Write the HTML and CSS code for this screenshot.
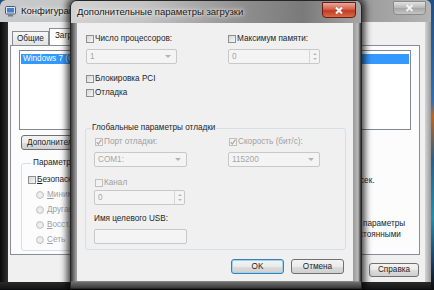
FILE: index.html
```html
<!DOCTYPE html>
<html lang="ru">
<head>
  <meta charset="UTF-8">
  <title>Дополнительные параметры загрузки</title>
  <link rel="stylesheet" href="styles.css">
</head>
<body>
  <div class="desktop">
    <div class="window main-window">
      <div class="titlebar">
        <svg class="app-icon" width="11" height="11" viewBox="0 0 11 11">
          <rect x="0.5" y="0.5" width="10" height="7.5" rx="1" fill="#dfe6ee" stroke="#4a5a70"/>
          <rect x="2" y="2" width="7" height="4.5" fill="#3f7fd0"/>
          <rect x="3" y="8.5" width="5" height="2" fill="#6f7d8f"/>
        </svg>
        <span class="title">Конфигурация системы</span>
        <div class="close-btn close-inactive">
          <svg width="9" height="8" viewBox="0 0 9 8"><path d="M1.5 1 L7.5 7 M7.5 1 L1.5 7" stroke="#f4f4f4" stroke-width="1.8"/></svg>
        </div>
      </div>
      <div class="client">
        <div class="tabs">
          <div class="tab">Общие</div>
          <div class="tab tab-active">Загрузка</div>
        </div>
        <div class="tab-panel">
          <div class="listbox">
            <div class="list-row selected">Windows 7 (C:\Windows)</div>
          </div>
          <div class="panel-buttons">
            <button class="btn">Дополнительно...</button>
          </div>
          <div class="boot-options">
            <fieldset class="group boot-group">
              <legend>Параметры загрузки</legend>
              <label class="check"><span class="box"></span><span><u>Б</u>езопасный режим</span></label>
              <label class="radio"><span class="dot"></span><span><u>М</u>иним.</span></label>
              <label class="radio"><span class="dot"></span><span><u>Д</u>ругая</span></label>
              <label class="radio"><span class="dot"></span><span><u>В</u>осст.</span></label>
              <label class="radio"><span class="dot"></span><span><u>С</u>еть</span></label>
            </fieldset>
            <div class="right-col">
              <div class="timeout">сек.</div>
              <div class="persist">параметры<br>стоянными</div>
            </div>
          </div>
        </div>
        <div class="footer">
          <button class="btn">Справка</button>
        </div>
      </div>
    </div>

    <div class="window dialog">
      <div class="titlebar dialog-titlebar">
        <span class="title">Дополнительные параметры загрузки</span>
        <div class="close-btn close-active">
          <svg width="10" height="9" viewBox="0 0 10 9"><path d="M2 1.5 L8 7.5 M8 1.5 L2 7.5" stroke="#ffffff" stroke-width="2"/></svg>
        </div>
      </div>
      <div class="client dialog-client">
        <div class="option-grid">
          <div class="field">
            <label class="check"><span class="box"></span>Число процессоров:</label>
            <div class="combo disabled combo-cpu">1<span class="arrow"></span></div>
          </div>
          <div class="field">
            <label class="check"><span class="box"></span>Максимум памяти:</label>
            <div class="spin disabled spin-mem">0<span class="spin-btns"><i class="up"></i><i class="down"></i></span></div>
          </div>
        </div>
        <label class="check pci"><span class="box"></span>Блокировка PCI</label>
        <label class="check debug"><span class="box"></span>Отладка</label>

        <fieldset class="group debug-group">
          <legend>Глобальные параметры отладки</legend>
          <div class="option-grid debug-grid">
            <div class="field">
              <label class="check disabled-text"><span class="box box-checked"><svg width="6" height="6" viewBox="0 0 6 6"><path d="M0.6 3.2 L2.3 5 L5.4 0.6" fill="none" stroke="#a9a9a9" stroke-width="1.2"/></svg></span>Порт отладки:</label>
              <div class="combo disabled combo-port">COM1:<span class="arrow"></span></div>
              <label class="check disabled-text channel"><span class="box box-dim"></span>Канал</label>
              <div class="spin disabled spin-channel">0<span class="spin-btns"><i class="up"></i><i class="down"></i></span></div>
              <div class="usb-label">Имя целевого USB:</div>
              <div class="textbox disabled"></div>
            </div>
            <div class="field">
              <label class="check disabled-text"><span class="box box-checked"><svg width="6" height="6" viewBox="0 0 6 6"><path d="M0.6 3.2 L2.3 5 L5.4 0.6" fill="none" stroke="#a9a9a9" stroke-width="1.2"/></svg></span>Скорость (бит/с):</label>
              <div class="combo disabled combo-baud">115200<span class="arrow"></span></div>
            </div>
          </div>
        </fieldset>

        <div class="dialog-buttons">
          <button class="btn btn-default">OK</button>
          <button class="btn">Отмена</button>
        </div>
      </div>
    </div>
  </div>
</body>
</html>
```

FILE: styles.css
```css
body {
  margin: 0;
  font-family: 'Liberation Sans', Arial, sans-serif;
  font-size: 8.2px;
  line-height: 10px;
  color: #1e1e1e;
  background: #0c0c0c;
}
.desktop {
  position: relative;
  width: 434px;
  height: 290px;
  overflow: hidden;
  background: linear-gradient(to bottom, #1e4f86 0, #2f6fb5 35%, #c0651f 40%, #2a5f8a 55%, #1f8fb0 75%, #1b3f66 90%, #0c0c0c 100%);
}

/* windows */
.window {
  position: absolute;
  box-sizing: border-box;
  display: flex;
  flex-direction: column;
}
.main-window {
  z-index: 1;
  left: 0;
  top: 0;
  width: 431px;
  height: 289px;
  padding: 0 6px 7px 8px;
  background:
    linear-gradient(to top, #141414 0, #2a2a2a 7px, transparent 7px),
    linear-gradient(to right, #080808 0, #303030 8px, #7a7a7a 50%, #d4d4d4 calc(100% - 6px), #9a9a9a 100%);
  border-radius: 6px 6px 0 0;
}
.dialog {
  z-index: 2;
  left: 70px;
  top: 0;
  width: 292px;
  height: 289px;
  padding: 0 8px 7px 6px;
  background:
    linear-gradient(to top, #3a3a3a 0, #6e6e6e 6px, transparent 7px),
    linear-gradient(to right, #3c3c3c 0, #9c9c9c 5px, #9a9a9a calc(100% - 8px), #b9b9b9 calc(100% - 3px), #2c2c2c 100%);
  border: 1px solid #262626;
  border-radius: 6px 6px 0 0;
  box-shadow: 0 0 7px 3px rgba(0, 0, 0, 0.75);
}

.titlebar {
  position: relative;
  height: 22px;
  margin: 0 -6px 0 -8px;
  padding-left: 5px;
  display: flex;
  align-items: center;
  gap: 5px;
  border-radius: 6px 6px 0 0;
  background: linear-gradient(to right, #c9cacb 0, #bcbdbe 40%, #9c9c9c 85%, #b4b4b4 100%);
}
.title {
  font-size: 9.5px;
  color: #151515;
  text-shadow: 0 0 6px #fff, 0 0 3px #fff;
  white-space: nowrap;
}
.dialog-titlebar {
  margin: 0 -8px 0 -6px;
  padding-left: 6px;
  background: linear-gradient(to right, #d2d2d2 0, #c4c4c4 25%, #8e8e8e 60%, #7a7a7a 80%, #a6a6a6 100%);
}
.close-btn {
  position: absolute;
  top: 1px;
  display: flex;
  align-items: center;
  justify-content: center;
  box-sizing: border-box;
  border-radius: 0 0 4px 4px;
}
.close-inactive {
  right: 5px;
  width: 33px;
  height: 14px;
  border: 1px solid #8a8a8a;
  background: linear-gradient(to bottom, #e2e2e2, #b7b7b7 50%, #a6a6a6 51%, #c4c4c4);
}
.close-active {
  right: 5px;
  width: 34px;
  height: 16px;
  border: 1px solid #6a1b12;
  background: linear-gradient(to bottom, #e9a99a 0, #d2604a 45%, #c13b24 55%, #d96b45 100%);
}

.client {
  flex: 1;
  background: #f0f0f0;
  display: flex;
  flex-direction: column;
  min-height: 0;
}

/* back window contents */
.main-window .client {
  padding: 6px 5px 0 2px;
}
.tabs {
  display: flex;
  align-items: flex-end;
  height: 17px;
  padding-left: 2px;
}
.tab {
  height: 13px;
  padding: 0 4px;
  border: 1px solid #898c95;
  border-bottom: none;
  background: linear-gradient(to bottom, #f7f7f7, #e2e2e2);
  white-space: nowrap;
  line-height: 13px;
  margin-right: -1px;
}
.tab-active {
  height: 16px;
  background: #fff;
  position: relative;
  z-index: 1;
  margin: 0 1px;
  padding: 0 5px;
}
.tab-panel {
  height: 210px;
  box-sizing: border-box;
  border: 1px solid #898c95;
  background: #fcfcfc;
  padding: 4px 8px 0 8px;
}
.listbox {
  height: 80px;
  box-sizing: border-box;
  border: 1px solid #828790;
  background: #fff;
  padding: 3px 1px;
}
.list-row {
  height: 10px;
  padding-left: 2px;
  white-space: nowrap;
  overflow: hidden;
}
.selected {
  background: #3399ff;
  color: #fff;
}
.panel-buttons {
  display: flex;
  gap: 6px;
  margin: 5px 0 0 2px;
}
.btn {
  font: inherit;
  height: 15px;
  padding: 0 5px;
  box-sizing: border-box;
  border: 1px solid #707070;
  border-radius: 3px;
  color: #1e1e1e;
  background: linear-gradient(to bottom, #f3f3f3 0, #ebebeb 50%, #dddddd 51%, #cfcfcf 100%);
  white-space: nowrap;
}
.boot-options {
  display: flex;
  margin-top: 8px;
}
.group {
  margin: 0;
  padding: 0;
  border: 1px solid #d5dfe5;
  border-radius: 3px;
}
.group legend {
  padding: 0 2px;
  margin-left: 3px;
  line-height: 10px;
}
.boot-group {
  width: 180px;
  margin-left: 2px;
  padding: 7px 6px 5px 6px;
  display: flex;
  flex-direction: column;
  gap: 5px;
}
.radio {
  display: flex;
  align-items: center;
  gap: 3px;
  margin-left: 8px;
  color: #a0a0a0;
  white-space: nowrap;
}
.dot {
  width: 8px;
  height: 8px;
  box-sizing: border-box;
  border-radius: 50%;
  border: 1px solid #c4c4c4;
  background: radial-gradient(circle, #f4f4f4 0, #dedede 100%);
}
.right-col {
  flex: 1;
  display: flex;
  flex-direction: column;
  align-items: flex-end;
  padding: 18px 0 0 0;
}
.timeout {
  width: 20px;
  margin-right: 31px;
  white-space: nowrap;
}
.persist {
  width: 50px;
  margin: 32px 2px 0 0;
  text-indent: 4px;
  line-height: 11px;
  white-space: nowrap;
}
.footer {
  display: flex;
  justify-content: flex-end;
  gap: 6px;
  padding: 8px 1px 0 0;
}
.footer .btn {
  width: 50px;
  height: 14px;
}

/* dialog contents */
.dialog-client {
  padding: 11px 0 7px 0;
}
.option-grid {
  display: grid;
  grid-template-columns: 142px 92px;
  padding-left: 9px;
}
.field {
  display: flex;
  flex-direction: column;
  align-items: flex-start;
}
.check {
  display: flex;
  align-items: center;
  gap: 1px;
  height: 10px;
  white-space: nowrap;
}
.dialog-client > .check {
  margin-left: 9px;
}
.box {
  width: 8px;
  height: 8px;
  box-sizing: border-box;
  border: 1px solid #8e8f8f;
  background: linear-gradient(135deg, #d6d6d6, #f7f7f7);
  display: flex;
  align-items: center;
  justify-content: center;
}
.box-checked, .box-dim {
  border-color: #c0c0c0;
  background: #f2f2f2;
}
.disabled-text {
  color: #a0a0a0;
}
.combo, .spin, .textbox {
  position: relative;
  height: 15px;
  box-sizing: border-box;
  border: 1px solid #c8c8c8;
  border-radius: 2px;
  background: #f4f4f4;
  color: #a6a6a6;
  padding-left: 3px;
  line-height: 13px;
  margin-top: 5px;
}
.combo-cpu { width: 91px; }
.spin-mem { width: 92px; }
.arrow {
  position: absolute;
  right: 5px;
  top: 5px;
  border-left: 3px solid transparent;
  border-right: 3px solid transparent;
  border-top: 3px solid #b4b4b4;
}
.spin-btns {
  position: absolute;
  right: 0;
  top: 0;
  bottom: 0;
  width: 10px;
  border-left: 1px solid #d6d6d6;
  display: flex;
  flex-direction: column;
  align-items: center;
  justify-content: space-around;
  padding: 1px 0;
  box-sizing: border-box;
}
.spin-btns i {
  border-left: 2px solid transparent;
  border-right: 2px solid transparent;
}
.spin-btns .up { border-bottom: 2px solid #b8b8b8; }
.spin-btns .down { border-top: 2px solid #b8b8b8; }
.pci {
  margin-top: 10px;
}
.debug {
  margin-top: 4px;
}
.debug-group {
  margin: 25px 7px 0 8px;
  padding: 4px 0 5px 0;
}
.debug-group legend {
  margin-left: 5px;
  padding: 0 1px;
}
.debug-grid {
  padding-left: 8px;
  grid-template-columns: 134px 92px;
}
.debug-grid .check {
  margin-left: 1px;
}
.combo-port { width: 93px; }
.combo-baud { width: 92px; }
.channel {
  margin-top: 11px;
}
.spin-channel {
  width: 91px;
  margin-top: 2px;
}
.usb-label {
  margin-top: 9px;
  white-space: nowrap;
}
.textbox {
  width: 93px;
}
.dialog-buttons {
  margin-top: auto;
  display: flex;
  justify-content: flex-end;
  gap: 7px;
  padding-right: 9px;
}
.dialog-buttons .btn {
  width: 53px;
}
.btn-default {
  border-color: #3c7fb1;
  box-shadow: inset 0 0 0 1px #9fd3f2;
}
```
